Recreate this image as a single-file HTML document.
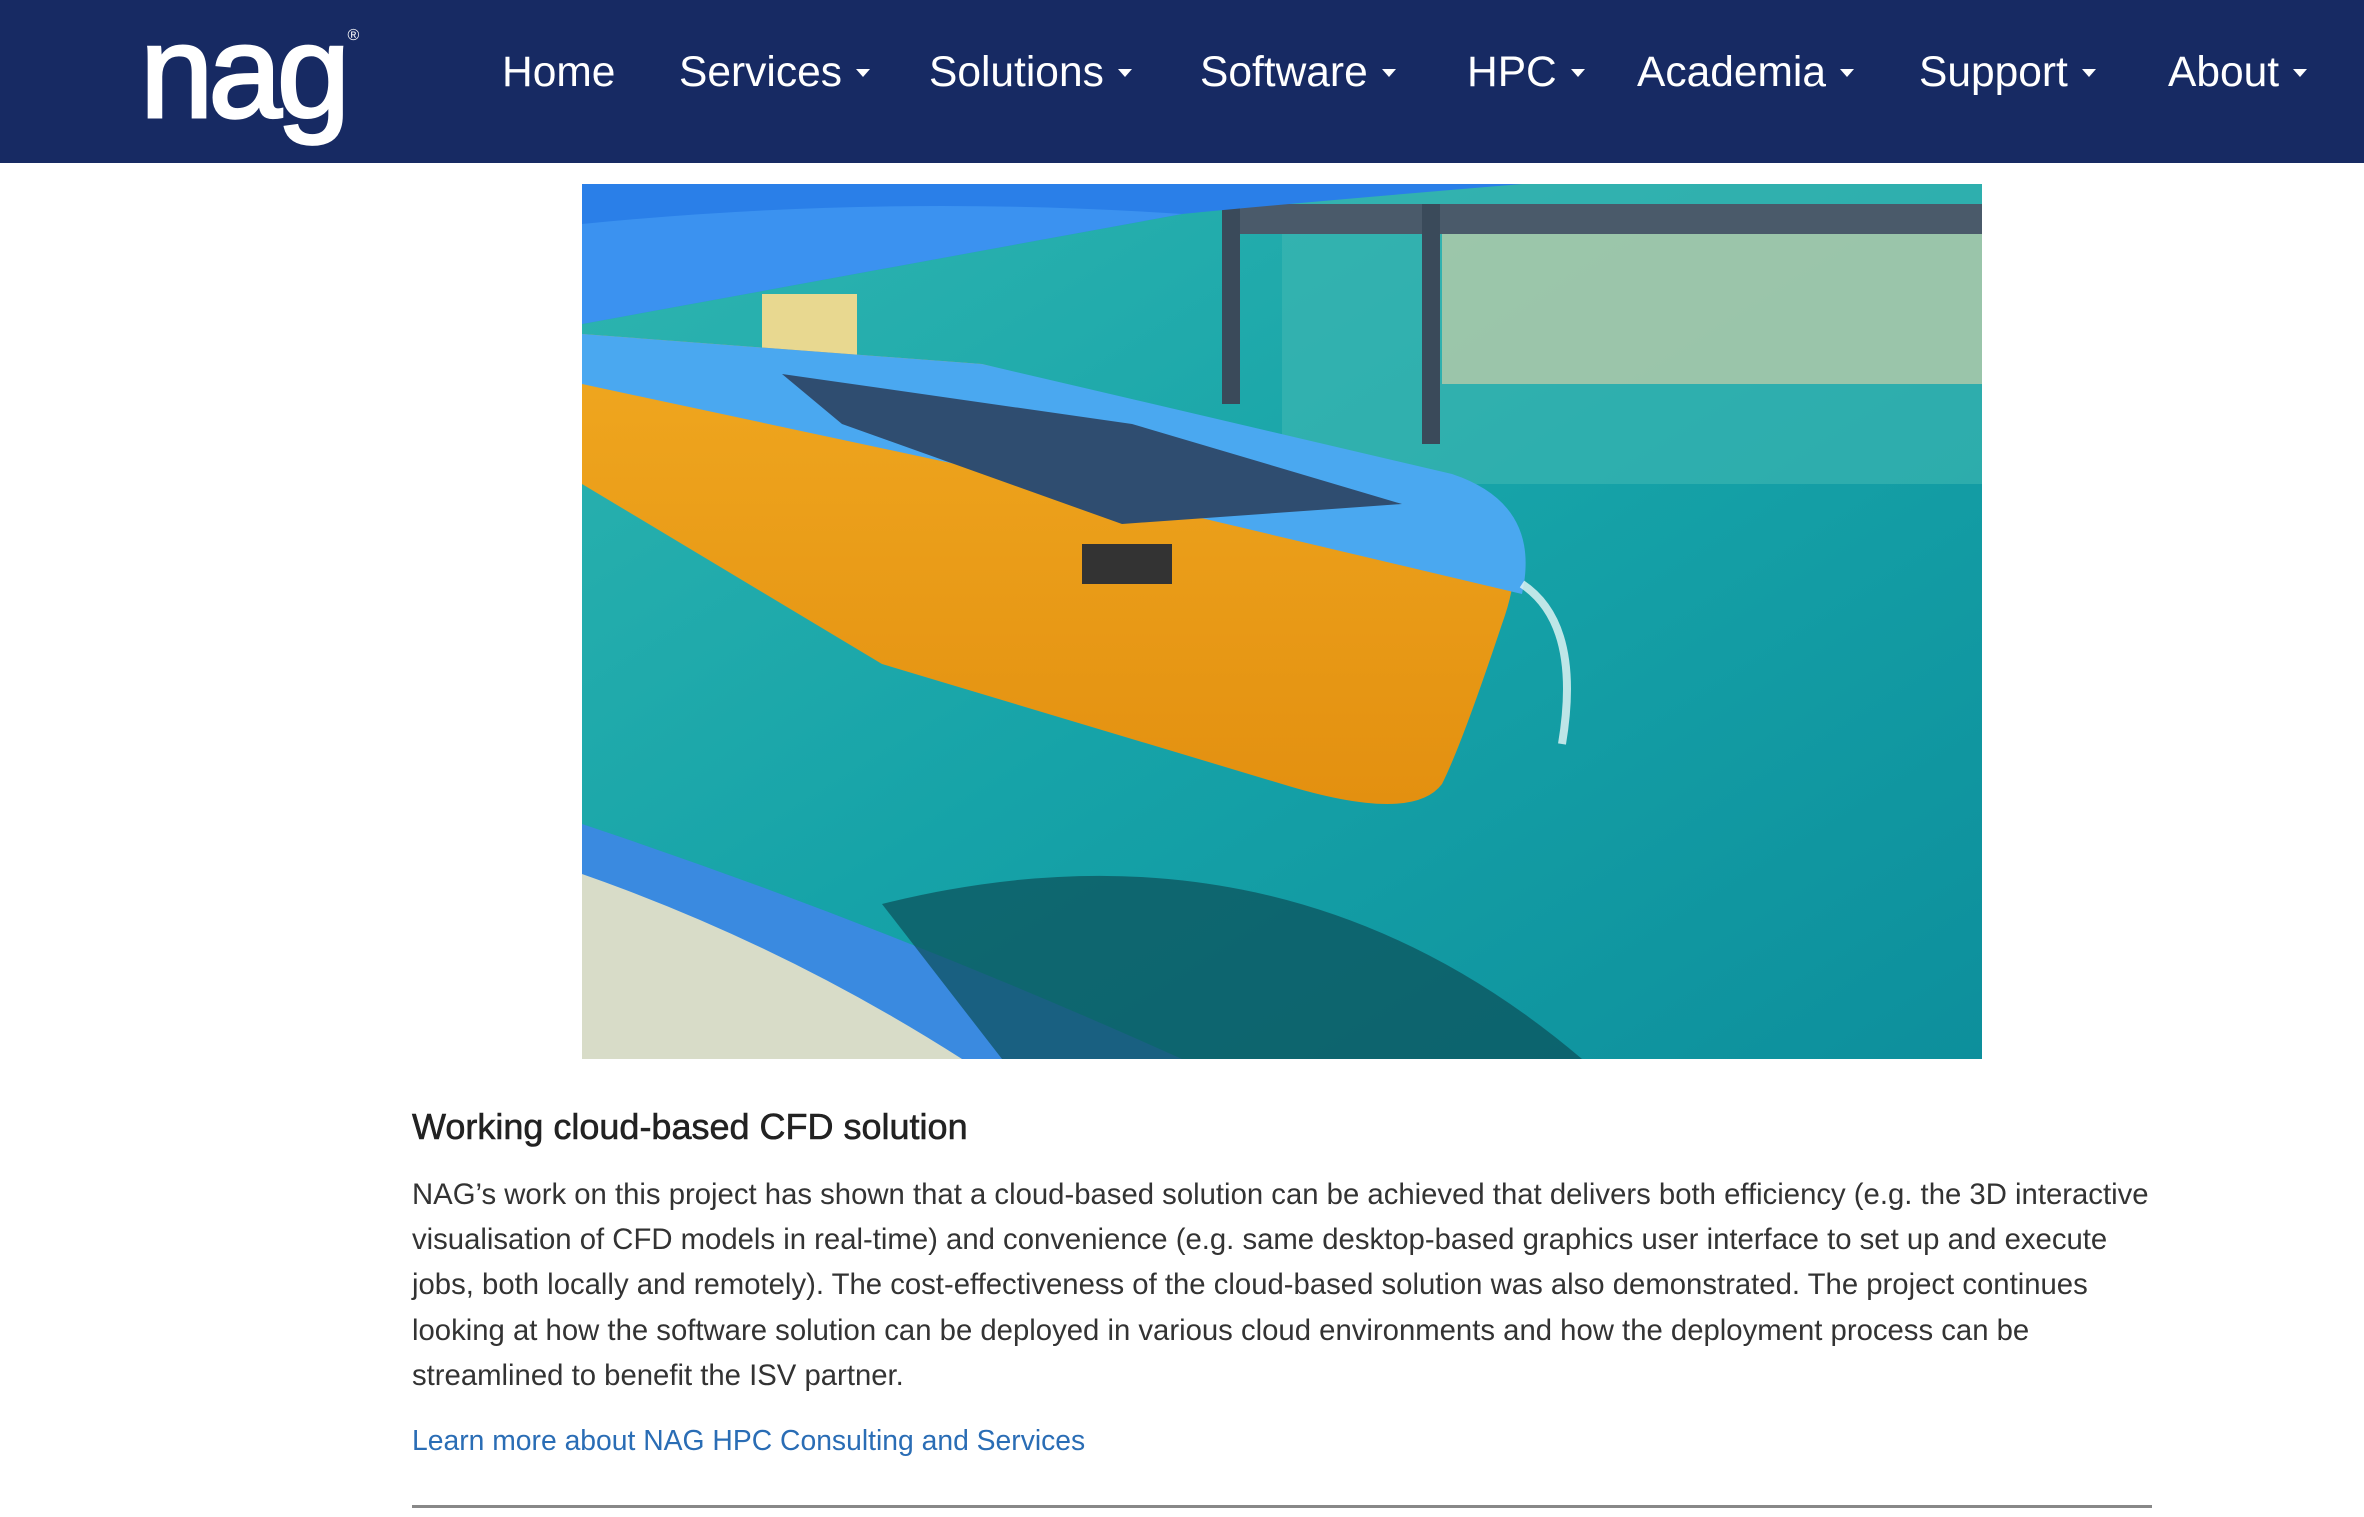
<!DOCTYPE html>
<html><head><meta charset="utf-8"><style>
*{margin:0;padding:0;box-sizing:border-box}
body{width:2364px;height:1517px;overflow:hidden;background:#fff;font-family:"Liberation Sans",sans-serif;position:relative}
nav{position:absolute;left:0;top:0;width:2364px;height:163px;background:#172a63}
.logo{position:absolute;left:140px;top:6px;color:#fff;font-size:132px;font-weight:normal;letter-spacing:-5px;font-family:"Liberation Sans",sans-serif;line-height:1;-webkit-text-stroke:3px #fff}
.logo sup{font-size:16px;position:absolute;top:22px;right:-14px;letter-spacing:0;-webkit-text-stroke:0}
.ni{position:absolute;top:47px;color:#fff;font-size:42.5px;line-height:52px;white-space:nowrap}
.ni i{display:inline-block;width:0;height:0;border-left:7px solid transparent;border-right:7px solid transparent;border-top:8px solid #fff;margin-left:14px;vertical-align:middle;position:relative;top:-2px}
.img{position:absolute;left:582px;top:184px;width:1400px;height:875px}
h2{position:absolute;left:412px;top:1106px;font-size:36px;font-weight:normal;color:#222;-webkit-text-stroke:0.6px #222;white-space:nowrap}
p{position:absolute;left:412px;top:1172px;width:1900px;font-size:29.3px;line-height:45.2px;color:#333;white-space:nowrap}
a{position:absolute;left:412px;top:1424px;font-size:28.3px;color:#2a6db5;text-decoration:none;white-space:nowrap}
hr{position:absolute;left:412px;top:1505px;width:1740px;border:0;border-top:3px solid #888}
</style></head><body>
<nav>
<div class="logo">nag<sup>®</sup></div>
<div class="ni" style="left:502px">Home</div>
<div class="ni" style="left:679px">Services<i></i></div>
<div class="ni" style="left:929px">Solutions<i></i></div>
<div class="ni" style="left:1200px">Software<i></i></div>
<div class="ni" style="left:1467px">HPC<i></i></div>
<div class="ni" style="left:1637px">Academia<i></i></div>
<div class="ni" style="left:1919px">Support<i></i></div>
<div class="ni" style="left:2168px">About<i></i></div>
</nav>
<svg class="img" viewBox="0 0 1400 875" preserveAspectRatio="none">
<defs>
<linearGradient id="w" x1="0" y1="0" x2="1" y2="1"><stop offset="0" stop-color="#2fb5b0"/><stop offset="0.5" stop-color="#16a3a8"/><stop offset="1" stop-color="#0d8f9c"/></linearGradient>
<linearGradient id="h" x1="0" y1="0" x2="0" y2="1"><stop offset="0" stop-color="#f0a820"/><stop offset="1" stop-color="#e39010"/></linearGradient>
</defs>
<rect width="1400" height="875" fill="url(#w)"/>
<rect x="700" y="0" width="700" height="300" fill="#3fb8b2" opacity="0.6"/>
<rect x="860" y="20" width="540" height="180" fill="#c9cfa8" opacity="0.7"/>
<rect x="640" y="20" width="760" height="30" fill="#4a5a6a"/>
<rect x="640" y="20" width="18" height="200" fill="#3a4a5a"/>
<rect x="840" y="20" width="18" height="240" fill="#3a4a5a"/>
<path d="M0 0 H940 Q700 20 600 30 L0 140 Z" fill="#2a7fe8"/>
<path d="M0 40 Q300 10 600 30 L0 140 Z" fill="#3b92f0"/>
<rect x="180" y="110" width="95" height="80" fill="#e8d890"/>
<path d="M0 150 L400 180 L870 300 Q960 330 920 440 Q880 560 860 600 Q830 640 700 600 L300 480 L0 300 Z" fill="url(#h)"/>
<path d="M0 150 L400 180 L870 290 Q960 320 940 410 L560 320 L0 200 Z" fill="#4aa8f0"/>
<path d="M200 190 L550 240 L820 320 L540 340 L260 240 Z" fill="#2f4d70"/>
<path d="M500 360 L590 360 L590 400 L500 400 Z" fill="#333"/>
<path d="M0 640 Q300 740 600 875 L0 875 Z" fill="#3a8ae0"/>
<path d="M0 690 Q200 760 380 875 L0 875 Z" fill="#d8dcc8"/>
<path d="M300 720 Q700 620 1000 875 L420 875 Z" fill="#0b4e58" opacity="0.7"/>
<path d="M940 400 Q1000 440 980 560" stroke="#e8f8f8" stroke-width="8" fill="none" opacity="0.8"/>
</svg>
<h2>Working cloud-based CFD solution</h2>
<p>NAG’s work on this project has shown that a cloud-based solution can be achieved that delivers both efficiency (e.g. the 3D interactive<br>visualisation of CFD models in real-time) and convenience (e.g. same desktop-based graphics user interface to set up and execute<br>jobs, both locally and remotely). The cost-effectiveness of the cloud-based solution was also demonstrated. The project continues<br>looking at how the software solution can be deployed in various cloud environments and how the deployment process can be<br>streamlined to benefit the ISV partner.</p>
<a>Learn more about NAG HPC Consulting and Services</a>
<hr>
</body></html>
